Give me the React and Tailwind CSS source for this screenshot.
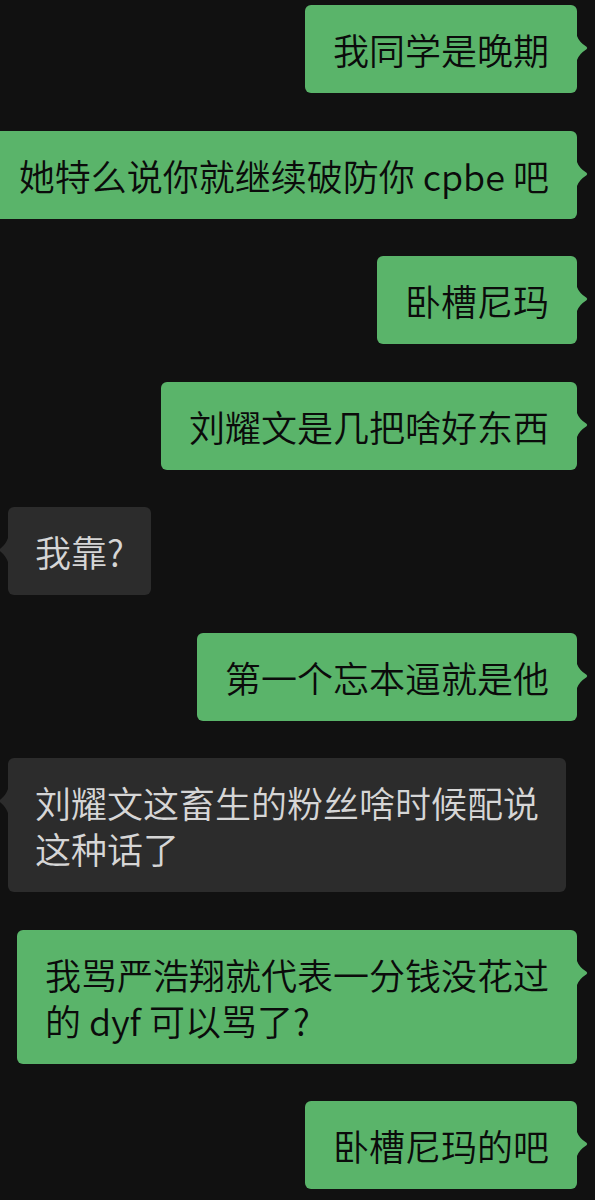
import React from "react";

const font = { fontFamily: '"Noto Sans CJK SC", "Noto Sans", sans-serif' };

function Tail({ side }) {
  if (side === "right") {
    return (
      <svg
        className="absolute left-full top-[31px]"
        width="11"
        height="24"
        viewBox="0 0 11 24"
      >
        <path d="M0 0 Q2 6 9.5 10.8 Q11 12 9.5 13.2 Q2 18 0 24 Z" fill="#5ab46a" />
      </svg>
    );
  }
  return (
    <svg
      className="absolute right-full top-[31px]"
      width="9"
      height="24"
      viewBox="0 0 9 24"
    >
      <path d="M9 0 Q7 6 1.2 10.8 Q0 12 1.2 13.2 Q7 18 9 24 Z" fill="#2c2c2c" />
    </svg>
  );
}

function Sent({ children }) {
  return (
    <div className="flex justify-end pr-[18px]">
      <div className="relative shrink-0 whitespace-nowrap rounded-[6px] bg-[#5ab46a] px-[28px] py-[21px] text-[36px] font-[350] leading-[46px] text-[#0b0b0b]">
        {children}
        <Tail side="right" />
      </div>
    </div>
  );
}

function Received({ children }) {
  return (
    <div className="flex justify-start pl-[8px]">
      <div className="relative shrink-0 whitespace-nowrap rounded-[6px] bg-[#2c2c2c] px-[27px] py-[21px] text-[36px] font-[350] leading-[46px] text-[#d6d6d6]">
        {children}
        <Tail side="left" />
      </div>
    </div>
  );
}

export default function App() {
  return (
    <div
      className="h-[1200px] w-[595px] overflow-hidden bg-[#111111]"
      style={font}
    >
      <div className="flex flex-col gap-[37.5px] pt-[5px]">
        <Sent>我同学是晚期</Sent>
        <Sent>她特么说你就继续破防你 cpbe 吧</Sent>
        <Sent>卧槽尼玛</Sent>
        <Sent>刘耀文是几把啥好东西</Sent>
        <Received>我靠?</Received>
        <Sent>第一个忘本逼就是他</Sent>
        <Received>
          刘耀文这畜生的粉丝啥时候配说
          <br />
          这种话了
        </Received>
        <Sent>
          我骂严浩翔就代表一分钱没花过
          <br />
          的 dyf 可以骂了?
        </Sent>
        <Sent>卧槽尼玛的吧</Sent>
      </div>
    </div>
  );
}
